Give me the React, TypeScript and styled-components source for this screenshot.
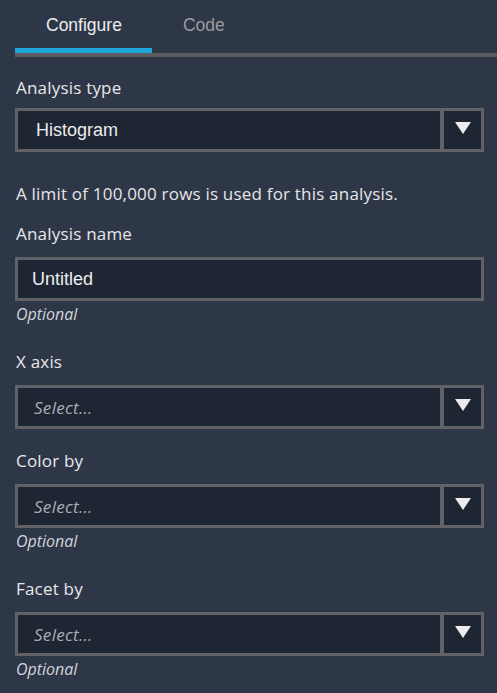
import React from "react";
import styled, { createGlobalStyle } from "styled-components";

const Global = createGlobalStyle`
  html, body {
    margin: 0;
    padding: 0;
    background: #2e3748;
  }
  body {
    font-family: "Open Sans", "Liberation Sans", sans-serif;
    color: #e6e6e6;
  }
  * { box-sizing: border-box; }
`;

const Panel = styled.div`
  width: 497px;
  height: 693px;
  background: #2e3748;
  overflow: hidden;
`;

const TabBar = styled.div`
  display: flex;
  margin-left: 15px;
  height: 57px;
  border-bottom: 4px solid #5b5d60;
`;

const Tab = styled.div<{ $active?: boolean }>`
  height: 53px;
  padding: 2px 30px 0 31px;
  display: flex;
  align-items: center;
  font-family: "Liberation Sans", Arial, sans-serif;
  font-size: 17.5px;
  color: ${(p) => (p.$active ? "#ececec" : "#9b9c9e")};
  border-bottom: 5px solid ${(p) => (p.$active ? "#1fa7d9" : "transparent")};
  margin-bottom: -1px;
`;

const Content = styled.div`
  padding: 0 13px 0 15px;
  display: flex;
  flex-direction: column;
`;

const Field = styled.div<{ $top: number }>`
  display: flex;
  flex-direction: column;
  margin-top: ${(p) => p.$top}px;
`;

const Label = styled.div<{ $gap?: number }>`
  font-size: 17px;
  letter-spacing: 0.2px;
  line-height: 24px;
  padding-left: 1px;
  color: #e8e8e8;
  margin-bottom: ${(p) => p.$gap ?? 11}px;
`;

const Note = styled.div`
  font-size: 17px;
  letter-spacing: 0.2px;
  line-height: 24px;
  padding-left: 1px;
  color: #e6e6e6;
  margin-top: 30px;
`;

const Box = styled.div`
  display: flex;
  height: 44px;
  border: 3px solid #606265;
  background: #1e2634;
`;

const Value = styled.div<{ $pad: number; $placeholder?: boolean }>`
  flex: 1;
  display: flex;
  align-items: center;
  padding-left: ${(p) => p.$pad}px;
  padding-top: 1px;
  font-family: ${(p) =>
    p.$placeholder ? `"Open Sans", sans-serif` : `"Liberation Sans", Arial, sans-serif`};
  font-style: ${(p) => (p.$placeholder ? "italic" : "normal")};
  font-size: ${(p) => (p.$placeholder ? "17px" : "18px")};
  letter-spacing: ${(p) => (p.$placeholder ? "0.3px" : "0")};
  color: ${(p) => (p.$placeholder ? "#a9aeb5" : "#ececec")};
`;

const ArrowCell = styled.div`
  width: 41px;
  border-left: 4px solid #606265;
  display: flex;
  align-items: center;
  justify-content: center;
  padding-bottom: 4px;
`;

const Helper = styled.div`
  font-size: 16px;
  font-style: italic;
  line-height: 20px;
  padding-left: 1px;
  color: #d2d4d8;
  margin-top: 3px;
`;

const Arrow = () => (
  <svg width="16" height="12" viewBox="0 0 16 12">
    <polygon points="0,0 16,0 8,12" fill="#ececec" />
  </svg>
);

const Select: React.FC<{ value?: string }> = ({ value }) => (
  <Box>
    <Value $pad={value ? 18 : 16} $placeholder={!value}>
      {value ?? "Select..."}
    </Value>
    <ArrowCell>
      <Arrow />
    </ArrowCell>
  </Box>
);

export default function App() {
  return (
    <Panel>
      <Global />
      <TabBar>
        <Tab $active>Configure</Tab>
        <Tab>Code</Tab>
      </TabBar>
      <Content>
        <Field $top={19}>
          <Label $gap={8}>Analysis type</Label>
          <Select value="Histogram" />
        </Field>
        <Note>A limit of 100,000 rows is used for this analysis.</Note>
        <Field $top={16}>
          <Label>Analysis name</Label>
          <Box>
            <Value $pad={14}>Untitled</Value>
          </Box>
          <Helper>Optional</Helper>
        </Field>
        <Field $top={26}>
          <Label>X axis</Label>
          <Select />
        </Field>
        <Field $top={20}>
          <Label>Color by</Label>
          <Select />
          <Helper>Optional</Helper>
        </Field>
        <Field $top={26}>
          <Label>Facet by</Label>
          <Select />
          <Helper>Optional</Helper>
        </Field>
      </Content>
    </Panel>
  );
}
